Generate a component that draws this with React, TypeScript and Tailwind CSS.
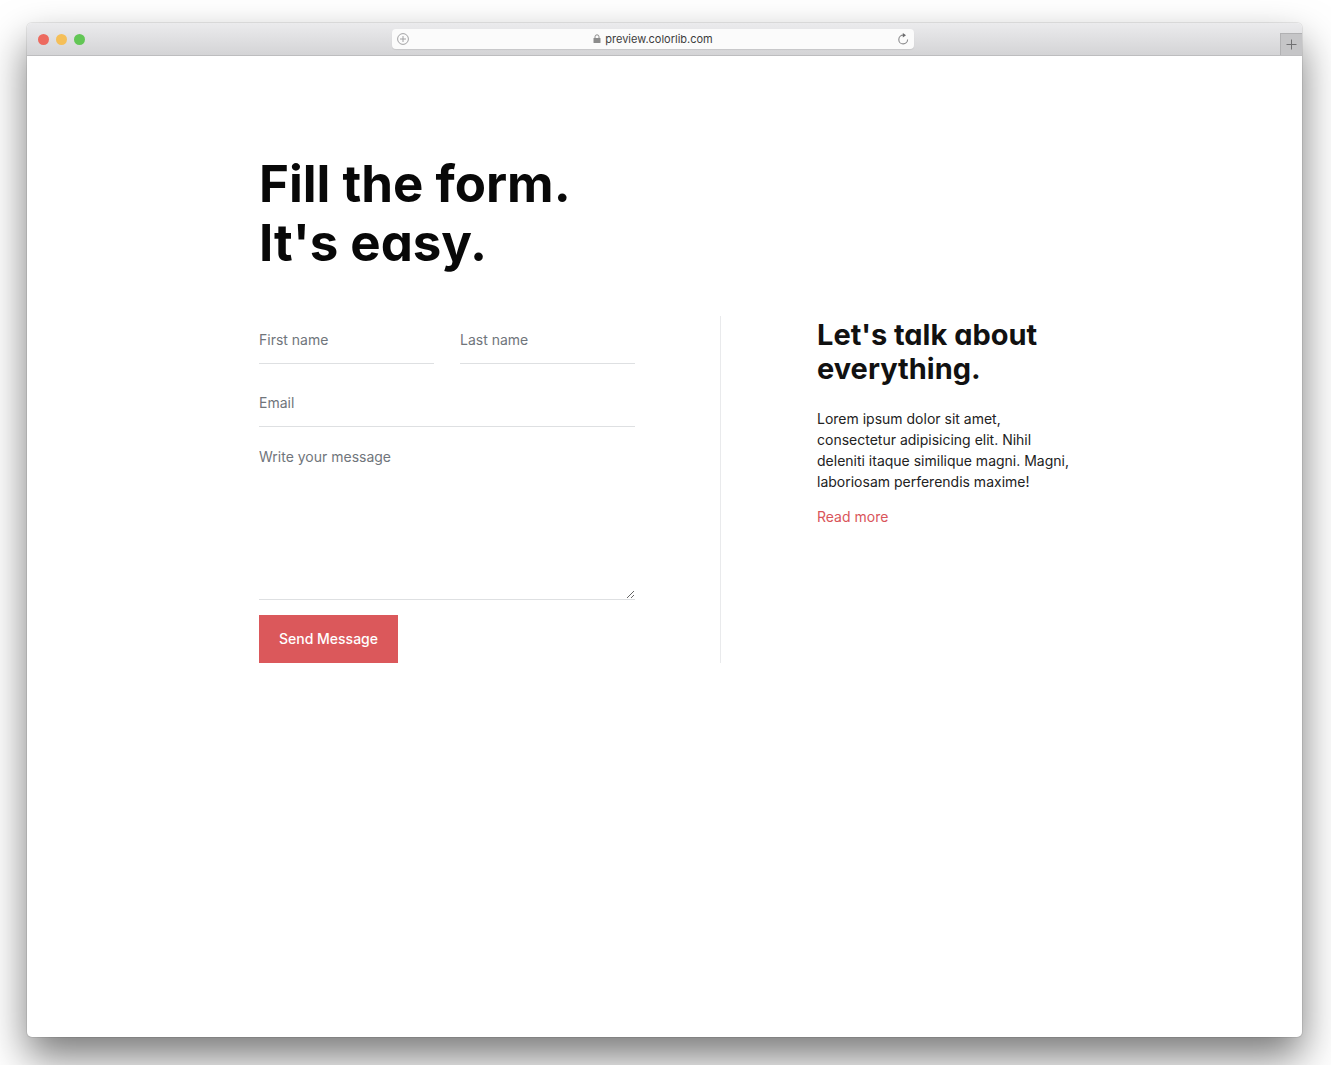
import React from "react";

const fieldClass =
  "block h-12 w-full min-w-0 border-b border-[#dee0e2] bg-transparent text-sm text-[#222222] placeholder:text-[#70757b] focus:outline-none focus:border-[#dc5659]";

function TitleBar() {
  return (
    <header className="grid h-[33px] shrink-0 grid-cols-[365fr_522px_388fr] items-center rounded-t-[5px] border-b border-[#bdbdbf] bg-gradient-to-b from-[#ebebed] to-[#d4d4d6]">
      <div className="flex gap-[7px] pl-[11px]">
        <button type="button" aria-label="Close" className="size-[11px] rounded-full bg-[#ed6a5f]" />
        <button type="button" aria-label="Minimize" className="size-[11px] rounded-full bg-[#f5bf58]" />
        <button type="button" aria-label="Zoom" className="size-[11px] rounded-full bg-[#62c655]" />
      </div>
      <div className="flex h-5 items-center justify-between rounded-[4px] bg-[#fbfbfb] px-[5px] shadow-[0_1px_1px_rgba(0,0,0,0.08)]">
        <button type="button" aria-label="Add bookmark" className="text-[#a2a2a4]">
          <svg width="12" height="12" viewBox="0 0 12 12" fill="none" stroke="currentColor">
            <circle cx="6" cy="6" r="5.4" />
            <path d="M6 3v6M3 6h6" />
          </svg>
        </button>
        <div className="flex items-center gap-1 text-[11px] leading-4 text-[#3d3d3d]">
          <svg width="8" height="10" viewBox="0 0 8 10" fill="none">
            <rect x="0.5" y="4" width="7" height="5" rx="0.6" fill="#8c8c8c" />
            <path d="M2 4.4V2.8a2 2 0 0 1 4 0v1.6" stroke="#8c8c8c" />
          </svg>
          <span>preview.colorlib.com</span>
        </div>
        <button type="button" aria-label="Reload" className="text-[#8a8a8c]">
          <svg width="12" height="12" viewBox="0 0 12 12" fill="none">
            <path d="M6.3 2.1A4.4 4.4 0 1 0 10.6 6.6" stroke="currentColor" strokeWidth="1.1" />
            <path d="M5.8 0v4.4L9 2.3z" fill="#6b6b6d" />
          </svg>
        </button>
      </div>
      <div className="flex self-stretch justify-end">
        <button
          type="button"
          aria-label="New tab"
          className="flex size-[22px] items-center justify-center self-end border-l border-t border-[#b1b1b3] bg-[#c5c5c7] text-[#707072]"
        >
          <svg width="11" height="11" viewBox="0 0 11 11" stroke="currentColor">
            <path d="M5.5 0.5v10M0.5 5.5h10" />
          </svg>
        </button>
      </div>
    </header>
  );
}

function ContactForm() {
  return (
    <form className="flex flex-col gap-[15px] border-r border-[#e9eaec] pr-[85px]" onSubmit={(e) => e.preventDefault()}>
      <div className="grid grid-cols-2 gap-[26px]">
        <input aria-label="First name" placeholder="First name" className={fieldClass} />
        <input aria-label="Last name" placeholder="Last name" className={fieldClass} />
      </div>
      <input type="email" aria-label="Email" placeholder="Email" className={fieldClass} />
      <textarea
        aria-label="Write your message"
        placeholder="Write your message"
        className="block h-[158px] w-full resize-y border-b border-[#dee0e2] bg-transparent pt-[5px] text-sm text-[#222222] placeholder:text-[#70757b] focus:border-[#dc5659] focus:outline-none"
      />
      <button type="submit" className="h-12 self-start bg-[#db585b] px-5 text-sm font-medium text-white">
        Send Message
      </button>
    </form>
  );
}

export default function App() {
  return (
    <div className="flex min-h-screen overflow-hidden bg-white pt-[23px] pr-[29px] pb-7 pl-[27px] font-['Inter',sans-serif]">
      <div className="flex flex-1 flex-col rounded-[5px] bg-white shadow-[0_0_0_1px_rgba(0,0,0,0.08),0_20px_40px_rgba(0,0,0,0.53)]">
        <TitleBar />
        <main className="mx-auto w-full max-w-[811px] pt-[98px] pb-24">
          <h1 className="text-[51px] leading-[59px] font-bold text-[#080808] [font-feature-settings:'cv11']">
            Fill the form.
            <br />
            It's easy.
          </h1>
          <div className="mt-11 grid grid-cols-[462fr_349fr]">
            <ContactForm />
            <aside className="pt-0.5 pl-24">
              <h2 className="text-[29px] leading-[34px] font-bold text-[#111111] [font-feature-settings:'cv11']">
                Let's talk about everything.
              </h2>
              <p className="mt-[22px] text-sm leading-[21px] text-[#222222]">
                Lorem ipsum dolor sit amet, consectetur adipisicing elit. Nihil deleniti itaque similique magni. Magni,
                laboriosam perferendis maxime!
              </p>
              <a href="#more" className="mt-3.5 inline-block text-sm leading-[21px] text-[#d9555a]">
                Read more
              </a>
            </aside>
          </div>
        </main>
      </div>
    </div>
  );
}
